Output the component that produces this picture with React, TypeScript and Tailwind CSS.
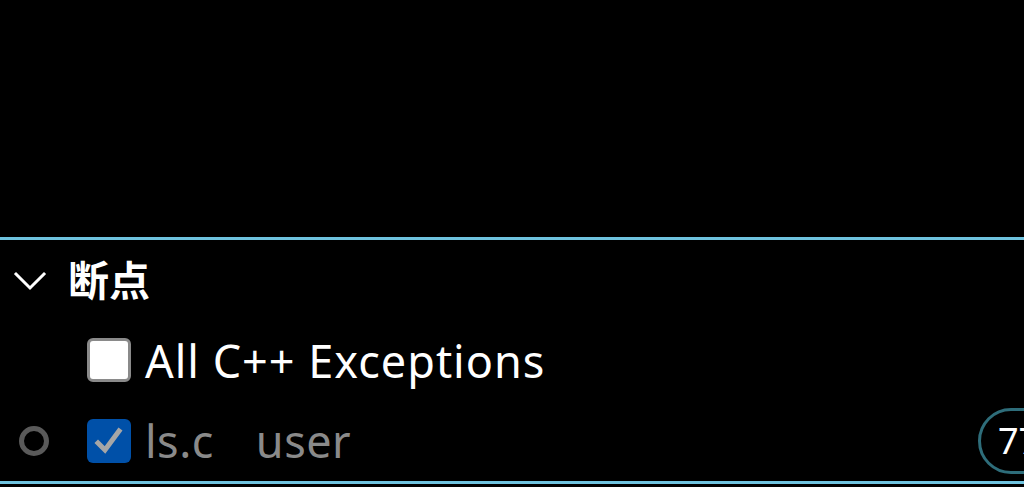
import React from "react";

const font = { fontFamily: '"Noto Sans", "Noto Sans CJK SC", sans-serif' };

function Chevron() {
  return (
    <svg width="36" height="36" viewBox="0 0 36 36" fill="none" className="shrink-0">
      <path d="M4 12 L18 26 L32 12" stroke="#ffffff" strokeWidth="3" strokeLinecap="square" />
    </svg>
  );
}

function Check() {
  return (
    <svg width="34" height="34" viewBox="0 0 34 34" fill="none">
      <path d="M6 19 L13 26 L27 7" stroke="#a6a6a6" strokeWidth="5" strokeLinecap="square" />
    </svg>
  );
}

export default function App() {
  return (
    <div className="h-[487px] w-[1024px] overflow-hidden bg-black text-white" style={font}>
      <div className="h-[237px]" />
      <div className="border-y-[3px] border-[#6fc3df]">
        {/* Header */}
        <div className="flex h-[80px] items-center pl-[12px]">
          <Chevron />
          <span className="ml-[20px] text-[41px] font-bold leading-none">断点</span>
        </div>

        {/* All C++ Exceptions */}
        <div className="flex h-[80px] items-center pl-[87px]">
          <div className="h-[44px] w-[44px] shrink-0 rounded-[6px] border-[3px] border-[#8a8a8a] bg-white" />
          <span className="ml-[14px] text-[45px] leading-none tracking-[1px]">All C++ Exceptions</span>
        </div>

        {/* ls.c */}
        <div className="flex h-[81px] items-center overflow-hidden">
          <div className="ml-[19px] h-[30px] w-[30px] shrink-0 rounded-full border-[5px] border-[#5a5a5a]" />
          <div className="ml-[38px] flex h-[44px] w-[44px] shrink-0 items-center justify-center rounded-[6px] bg-[#0050a8]">
            <Check />
          </div>
          <span className="ml-[14px] text-[45px] leading-none text-[#8a8a8a] tracking-[0.5px]">ls.c</span>
          <span className="ml-[42px] text-[45px] leading-none text-[#8a8a8a] tracking-[0.5px]">user</span>
          <div className="ml-auto mr-[-40px] flex h-[66px] w-[86px] shrink-0 items-center rounded-full border-[3px] border-[#2e6d7a] pl-[17px] text-[36px] leading-none">
            77
          </div>
        </div>
      </div>
    </div>
  );
}
